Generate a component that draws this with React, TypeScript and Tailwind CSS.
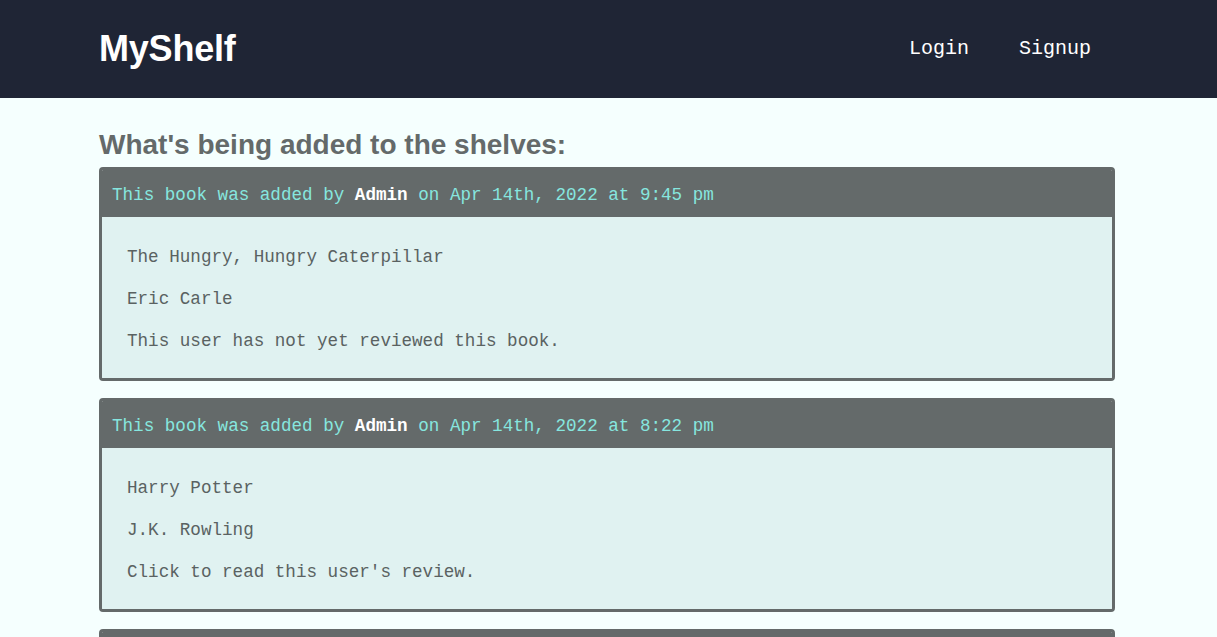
const books = [
  {
    time: "Apr 14th, 2022 at 9:45 pm",
    title: "The Hungry, Hungry Caterpillar",
    author: "Eric Carle",
    review: "This user has not yet reviewed this book.",
  },
  {
    time: "Apr 14th, 2022 at 8:22 pm",
    title: "Harry Potter",
    author: "J.K. Rowling",
    review: "Click to read this user's review.",
  },
  {
    time: "Apr 14th, 2022 at 7:10 pm",
    title: "Charlotte's Web",
    author: "E.B. White",
    review: "This user has not yet reviewed this book.",
  },
];

function BookCard({ book }: { book: (typeof books)[number] }) {
  return (
    <div className="mb-[17px] rounded-[4px] border-[3px] border-[#646a6a] overflow-hidden">
      <div className="bg-[#646a6a] h-[47px] flex items-center pt-[3px] px-[10px] text-[17.6px] text-[#86e6df] font-['Liberation_Mono',monospace]">
        <span>
          This book was added by <b className="text-white">Admin</b> on {book.time}
        </span>
      </div>
      <div className="bg-[#e0f2f1] px-[25px] pt-[11px] pb-[8px] text-[17.6px] text-[#5a6262] font-['Liberation_Mono',monospace]">
        <p className="my-[16px] leading-[26px]">{book.title}</p>
        <p className="my-[16px] leading-[26px]">{book.author}</p>
        <p className="my-[16px] leading-[26px] cursor-pointer">{book.review}</p>
      </div>
    </div>
  );
}

export default function App() {
  return (
    <div className="min-h-screen bg-[#f5fffe]">
      <header className="bg-[#1f2535] h-[98px]">
        <div className="mx-[99px] h-full flex items-center justify-between">
          <h1 className="text-[36px] font-bold text-white font-['Liberation_Sans',sans-serif] tracking-[-0.2px]">
            MyShelf
          </h1>
          <nav className="flex font-['Liberation_Mono',monospace] text-[20px] text-white mr-[2px]">
            <a className="px-[25px] cursor-pointer">Login</a>
            <a className="px-[25px] cursor-pointer">Signup</a>
          </nav>
        </div>
      </header>
      <main className="mx-[99px] max-w-[1016px] pt-[31px]">
        <h2 className="text-[28px] leading-[32px] font-bold text-[#646a6a] font-['Liberation_Sans',sans-serif] mb-[6px]">
          What's being added to the shelves:
        </h2>
        {books.map((b, i) => (
          <BookCard key={i} book={b} />
        ))}
      </main>
    </div>
  );
}
